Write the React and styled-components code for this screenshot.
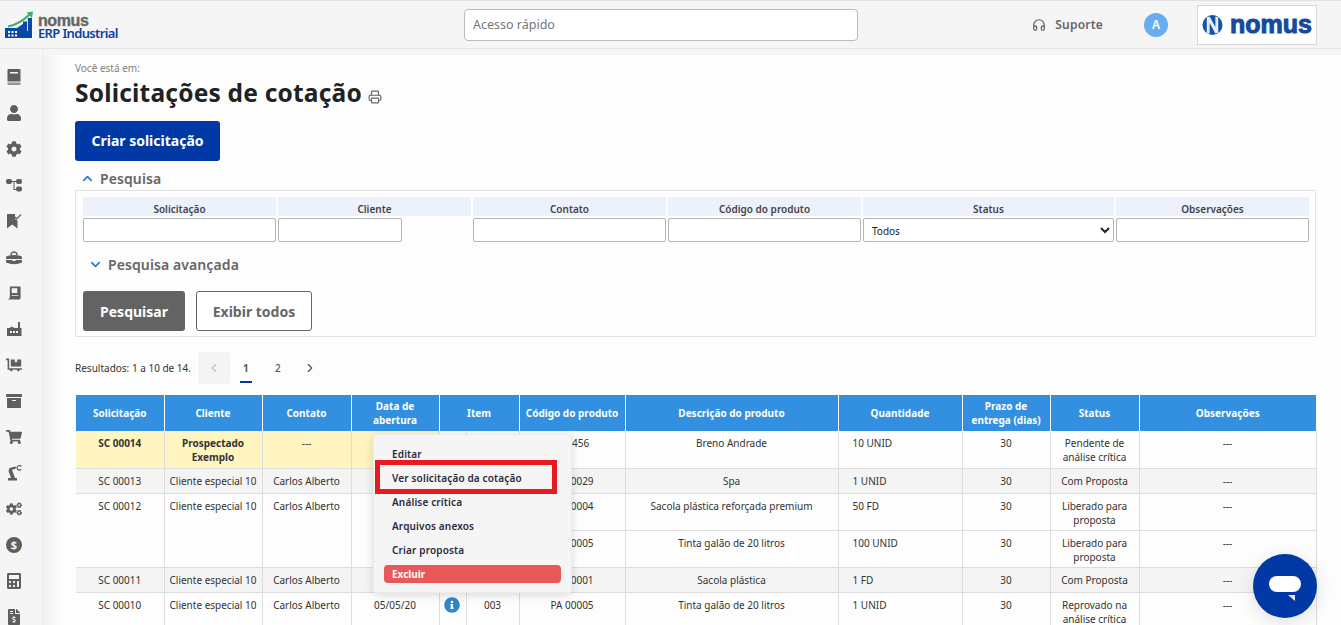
import React from 'react';
import styled, { createGlobalStyle } from 'styled-components';
import { ChevronUp, ChevronDown, ChevronLeft, ChevronRight, Printer, Headphones } from 'lucide-react';
import { FaUser, FaCog, FaDollyFlatbed, FaArchive, FaShoppingCart, FaCogs, FaCalculator, FaFileInvoiceDollar, FaInfoCircle } from 'react-icons/fa';

const Global = createGlobalStyle`
  html, body { margin: 0; padding: 0; height: 625px; overflow: hidden; background: #f5f5f5; }
  body { font-family: "Noto Sans", "Open Sans", sans-serif; color: #222; }
  * { box-sizing: border-box; }
`;

const Page = styled.div`
  width: 1341px; height: 625px; overflow: hidden; position: relative;
  display: flex; flex-direction: column;
`;
const Header = styled.header`
  height: 49px; flex: none; background: #f5f5f5; border-top: 1px solid #e2e2e2; border-bottom: 1px solid #e6e6e6;
  display: grid; grid-template-columns: 464px 394px 245px 94px 120px; align-items: center;
`;
const Brand = styled.div`display: flex; align-items: center; padding-left: 5px; gap: 5px;`;
const BrandText = styled.div`display: flex; flex-direction: column; line-height: 12px; margin-top: 6px;`;
const BrandTop = styled.span`
  font-family: "Liberation Sans", sans-serif; font-size: 16px; font-weight: 700; color: #666; letter-spacing: -.4px; -webkit-text-stroke: .4px #666;
`;
const BrandBottom = styled.span`font-size: 13px; line-height: 13px; font-weight: 600; color: #0b3fa0; letter-spacing: -.65px;`;
const QuickSearch = styled.div`
  width: 394px; height: 32px; background: #fff; border: 1px solid #bbb; border-radius: 4px;
  font-size: 12.5px; color: #777; display: flex; align-items: center; padding-left: 8px;
`;
const Support = styled.div`
  display: flex; align-items: center; gap: 9px; justify-self: end;
  font-size: 12px; font-weight: 600; color: #666; letter-spacing: .2px;
`;
const Avatar = styled.div`
  width: 24px; height: 24px; margin-left: 41px; border-radius: 50%; background: #66aef0; color: #fff; font-size: 12px; font-weight: 600;
  display: flex; align-items: center; justify-content: center;
`;
const CompanyLogo = styled.div`
  width: 120px; height: 40px; background: #fff; border: 1px solid #d6d6d6; display: flex; align-items: center; gap: 7px; padding-left: 4px;
  font-family: "Liberation Sans", sans-serif; font-weight: 700; font-size: 25px; color: #154a9f; -webkit-text-stroke: 1px #154a9f;
  letter-spacing: 0; line-height: 1;
`;
const Body = styled.div`flex: 1; display: flex; min-height: 0;`;
const Sidebar = styled.nav`
  width: 43px; flex: none; background: #f5f5f5; border-right: 1px solid #ededed; display: flex; flex-direction: column; align-items: center;
  padding: 20px 14px 0 0; gap: 20px; color: #5f5f5f; overflow: hidden;
`;
const SideIcon = styled.div`height: 16px; flex: none; display: flex; align-items: center; justify-content: center; font-size: 16px;`;
const Main = styled.main`
  flex: 1; margin-top: 6px; padding: 6px 25px 0 32px; min-width: 0; overflow: hidden;
  background: linear-gradient(90deg, #f1f1f1, #fdfdfd 18px);
`;
const Crumb = styled.div`font-size: 10px; line-height: 14px; color: #808080;`;
const TitleRow = styled.div`display: flex; align-items: flex-end; gap: 6px; height: 32px; margin-top: 2px; color: #666;`;
const Title = styled.h1`margin: 0; font-size: 24.5px; line-height: 32px; font-weight: 700; color: #222; letter-spacing: .2px;`;
const PrintIcon = styled(Printer)`margin-bottom: 5px;`;
const PrimaryButton = styled.button`
  display: block; margin-top: 12px; width: 145px; height: 40px; border: 0; border-radius: 3px; background: #0039a6; color: #fff;
  font: 700 14px "Noto Sans", sans-serif; padding: 0 0 2px;
`;
const SectionToggle = styled.div`
  display: flex; align-items: center; height: 18px; margin-top: 8px; gap: 5px; padding-left: 5px;
  font-size: 14px; font-weight: 600; color: #666; letter-spacing: .1px;
`;
const SearchPanel = styled.section`
  margin-top: 3px; width: 1241px; height: 147px; border: 1px solid #e3e3e3; padding: 6px 7px;
`;
const FieldGrid = styled.div`
  display: grid; grid-template-columns: 193px 193px 193px 193px 251px 193px; column-gap: 2px;
`;
const FieldHead = styled.div`
  height: 19px; background: #ecf1fc; font-size: 10px; font-weight: 600; color: #444; text-align: center; line-height: 25px;
`;
const FieldBox = styled.div`
  margin-top: 2px; height: 24px; width: ${p => p.$w || '100%'}; background: #fff; border: 1px solid #b5b5b5; border-radius: 2px;
`;
const SelectBox = styled.select`
  margin-top: 2px; height: 24px; width: 100%; background: #fff; border: 1px solid #b5b5b5; border-radius: 2px;
  font: 10px "Noto Sans", sans-serif; color: #222; padding: 2px 0 0 4px;
`;
const AdvancedToggle = styled(SectionToggle)`margin-top: 13px;`;
const ButtonRow = styled.div`display: flex; gap: 11px; margin-top: 18px;`;
const DarkButton = styled.button`
  width: 102px; height: 40px; border: 0; border-radius: 3px; background: #636363; color: #fff; font: 700 14px "Noto Sans", sans-serif;
`;
const OutlineButton = styled.button`
  width: 116px; height: 40px; border: 1px solid #666; border-radius: 3px; background: #fff; color: #666; font: 700 14px "Noto Sans", sans-serif;
`;
const ResultsRow = styled.div`display: flex; align-items: center; margin-top: 15px; height: 32px; font-size: 10px; color: #333;`;
const PageBtn = styled.div`
  width: 32px; height: 32px; display: flex; align-items: center; justify-content: center; border-radius: 3px; position: relative;
  background: ${p => p.$muted ? '#f4f4f4' : 'transparent'}; color: ${p => p.$muted ? '#bbb' : '#555'};
  font-weight: ${p => p.$active ? 700 : 500}; font-size: 10px; margin-left: ${p => p.$first ? '7px' : 0};
  ${p => p.$active ? `&:after{content:'';position:absolute;left:10px;right:10px;bottom:1px;height:2px;background:#0039a6;}` : ''}
`;
const TableWrap = styled.div`margin: 11px 0 0 1px; position: relative; width: 1240px;`;
const Table = styled.table`
  border-collapse: collapse; table-layout: fixed; width: 1240px; font-size: 10px; color: #333;
`;
const Col = styled.col`width: ${p => p.$w}px;`;
const Th = styled.th`
  background: #3390e0; color: #fff; font-weight: 700; font-size: 10px; height: 36px; padding: 0 4px; line-height: 14px;
  border-left: 1px solid #fff; &:first-child { border-left: 0; }
`;
const Tr = styled.tr`height: ${p => p.$h}px;`;
const Td = styled.td`
  border: 1px solid #ddd; border-top: 0; vertical-align: top; padding: 5px 4px 3px; line-height: 14px;
  text-align: ${p => p.$left ? 'left' : 'center'}; ${p => p.$left ? 'padding-left: 14px;' : ''}
  background: ${p => p.$bg || 'transparent'}; font-weight: ${p => p.$bold ? 700 : 400};
  &:first-child { border-left: 0; }
`;
const InfoDot = styled.span`color: #2f86c9; font-size: 16px; display: inline-flex; margin: -1px 0 0 -2px;`;
const Menu = styled.div`
  position: absolute; left: 297px; top: 39px; width: 199px; height: 159px; background: #f5f5f5; border-radius: 3px; border: 1px solid #ececec;
  box-shadow: 0 2px 10px rgba(0,0,0,.14); padding-top: 7px; display: flex; flex-direction: column;
`;
const MenuItem = styled.div`
  height: 24px; line-height: 24px; padding-left: 18px; font-size: 10px; font-weight: 600; color: #2a2a3a; letter-spacing: .15px; position: relative;
  ${p => p.$marked ? `&:after{content:'';position:absolute;box-sizing:border-box;left:1px;top:-6px;width:182px;height:34px;border:5px solid #e8191f;}` : ''}
`;
const DangerItem = styled.div`
  height: 18px; line-height: 18px; margin: 3px 10px 0; border-radius: 4px; background: #e85858; color: #fff; font-size: 10px; font-weight: 700; padding-left: 8px;
`;
const ChatBubble = styled.div`
  position: absolute; right: 24px; bottom: 7px; width: 64px; height: 64px; border-radius: 50%; background: #0039a6;
  display: flex; align-items: center; justify-content: center; box-shadow: 0 4px 18px rgba(0,0,0,.12);
`;

const LogoMark = () => (
  <svg width="28" height="28" viewBox="0 0 28 28">
    <path d="M3 15.5 C11 14 19 9 25 3" fill="none" stroke="#3dae6c" strokeWidth="2.2" />
    <path d="M21.5 1.5 L28 0.5 L27 7 Z" fill="#3dae6c" />
    <path d="M0 17 L12 17 L18 13 V10.5 H22 V7 H27 V27 H0 Z" fill="#0a4aa6" />
    <path d="M22.5 7 V20" stroke="#fff" strokeWidth="0.8" />
    <g fill="#fff"><rect x="3" y="20" width="2" height="2"/><rect x="6.5" y="20" width="2" height="2"/><rect x="10" y="20" width="2" height="2"/><rect x="3" y="23.5" width="2" height="2"/><rect x="6.5" y="23.5" width="2" height="2"/><rect x="10" y="23.5" width="2" height="2"/></g>
  </svg>
);
const NomusGlobe = () => (
  <svg width="21" height="24" viewBox="0 0 22 24">
    <circle cx="11" cy="12" r="10.5" fill="#1253a8" />
    <path d="M5 21 V4 L8 3 L14 14 V3 L17 4 V20 L14 21 L8 10 V21 Z" fill="#e5ecf5" />
  </svg>
);
const BookIcon = () => (
  <svg width="14" height="16" viewBox="0 0 14 16" fill="currentColor"><path d="M1.5 0 H12.5 Q13.5 0 13.5 1 V12.5 H0.5 V1 Q0.5 0 1.5 0 Z M3 3 V4.6 H11 V3 Z" fillRule="evenodd"/><path d="M0.5 13.5 H13.5 V16 H2 Q0.5 16 0.5 14.5 Z" opacity=".65"/></svg>
);
const DiagramIcon = () => (
  <svg width="16" height="14" viewBox="0 0 16 14" fill="currentColor"><rect x="0" y="1" width="6" height="5" rx="2"/><rect x="10" y="1" width="6" height="5" rx="2"/><rect x="10" y="8.5" width="6" height="5" rx="2"/><path d="M5 3 H11 V4 H8.5 V11 H11 V12 H7.5 V4 H5 Z"/></svg>
);
const BookmarkCheck = () => (
  <svg width="16" height="16" viewBox="0 0 16 16" fill="currentColor"><path d="M1 1 H9 V6 L11.5 7.5 V15.5 L6.2 11.5 L1 15.5 Z"/><path d="M9 4 L10.8 5.8 L15 1.5" fill="none" stroke="currentColor" strokeWidth="1.2"/></svg>
);
const Kit = () => (
  <svg width="16" height="15" viewBox="0 0 16 15" fill="currentColor"><path d="M1 6 Q8 4 15 6 Q16 6.5 16 8 V9 H0 V8 Q0 6.5 1 6 Z"/><path d="M0 10 H6.5 V11 H9.5 V10 H16 V12.5 Q8 16 0 12.5 Z"/><path d="M4.5 5 V3 Q8 -0.5 11.5 3 V5 H10 V3.6 Q8 2 6 3.6 V5 Z"/></svg>
);
const Ledger = () => (
  <svg width="15" height="16" viewBox="0 0 16 16" fill="currentColor"><path d="M3 1 H14.5 V13 Q14.5 15 12.5 15 H1 Q3 14 3 12 Z M5 3 V8 H11 V3 Z M5 10 V11 H12 V10 Z" fillRule="evenodd"/></svg>
);
const Factory = () => (
  <svg width="16" height="16" viewBox="0 0 16 16" fill="currentColor"><path d="M1 7 H4 L5 5.5 L9 7 H12 V1 H14 V7 H15.5 V15 H1 Z M4 10 V12 H6 V10 Z M7 10 V12 H9 V10 Z M10 10 V12 H12 V10 Z" fillRule="evenodd"/></svg>
);
const Robot = () => (
  <svg width="16" height="16" viewBox="0 0 16 16" fill="currentColor"><path d="M2 15.5 V13 L5 13 L2.5 6 L3.5 3 L9.5 1.5 L10.2 3.2 L6 5 L9 13 H11 V15.5 Z"/><path d="M15.5 1.2 Q11.5 -0.5 11 2.8 Q11.5 6 15.5 4.5" fill="none" stroke="currentColor" strokeWidth="1.3"/></svg>
);
const DollarRound = () => (
  <svg width="16" height="16" viewBox="0 0 16 16"><circle cx="8" cy="8" r="8" fill="currentColor"/><text x="8" y="12" textAnchor="middle" fontSize="11" fontWeight="700" fill="#f5f5f5" fontFamily="Noto Sans">$</text></svg>
);

const headers = [
  ['Solicitação', 1], ['Cliente', 1], ['Contato', 1], ['Data de abertura', 1], ['Item', 2],
  ['Código do produto', 1], ['Descrição do produto', 1], ['Quantidade', 1], ['Prazo de entrega (dias)', 1], ['Status', 1], ['Observações', 1],
];
const widths = [88, 98, 89, 88, 27, 53, 106, 213, 124, 88, 89, 177];

const rows = [
  { y: true, s: 'SC 00014', c: 'Prospectado Exemplo', ct: '---', code: '123456', d: 'Breno Andrade', q: '10 UNID', st: 'Pendente de análise crítica', h: 37, dt: '' },
  { g: true, s: 'SC 00013', c: 'Cliente especial 10', ct: 'Carlos Alberto', code: 'PA 00029', d: 'Spa', q: '1 UNID', st: 'Com Proposta', h: 25 },
  { s: 'SC 00012', c: 'Cliente especial 10', ct: 'Carlos Alberto', code: 'PA 00004', d: 'Sacola plástica reforçada premium', q: '50 FD', st: 'Liberado para proposta', h: 37, span: 2 },
  { cont: true, code: 'PA 00005', d: 'Tinta galão de 20 litros', q: '100 UNID', st: 'Liberado para proposta', h: 37 },
  { g: true, s: 'SC 00011', c: 'Cliente especial 10', ct: 'Carlos Alberto', code: 'PA 00001', d: 'Sacola plástica', q: '1 FD', st: 'Com Proposta', h: 25 },
  { s: 'SC 00010', c: 'Cliente especial 10', ct: 'Carlos Alberto', dt: '05/05/20', info: true, item: '003', code: 'PA 00005', d: 'Tinta galão de 20 litros', q: '1 UNID', st: 'Reprovado na análise crítica', h: 37 },
];

export default function App() {
  const sideIcons = [<BookIcon />, <FaUser />, <FaCog />, <DiagramIcon />, <BookmarkCheck />, <Kit />, <Ledger />, <Factory />, <FaDollyFlatbed />, <FaArchive />, <FaShoppingCart />, <Robot />, <FaCogs />, <DollarRound />, <FaCalculator />, <FaFileInvoiceDollar />];
  return (
    <Page>
      <Global />
      <Header>
        <Brand>
          <LogoMark />
          <BrandText><BrandTop>nomus</BrandTop><BrandBottom>ERP Industrial</BrandBottom></BrandText>
        </Brand>
        <QuickSearch>Acesso rápido</QuickSearch>
        <Support><Headphones size={14} color="#555" />Suporte</Support>
        <Avatar>A</Avatar>
        <CompanyLogo><NomusGlobe />nomus</CompanyLogo>
      </Header>
      <Body>
        <Sidebar>{sideIcons.map((ic, i) => <SideIcon key={i}>{ic}</SideIcon>)}</Sidebar>
        <Main>
          <Crumb>Você está em:</Crumb>
          <TitleRow><Title>Solicitações de cotação</Title><PrintIcon size={14} /></TitleRow>
          <PrimaryButton>Criar solicitação</PrimaryButton>
          <SectionToggle><ChevronUp size={15} color="#1f78d1" strokeWidth={2.5} />Pesquisa</SectionToggle>
          <SearchPanel>
            <FieldGrid>
              <div><FieldHead>Solicitação</FieldHead><FieldBox /></div>
              <div><FieldHead>Cliente</FieldHead><FieldBox $w="124px" /></div>
              <div><FieldHead>Contato</FieldHead><FieldBox /></div>
              <div><FieldHead>Código do produto</FieldHead><FieldBox /></div>
              <div><FieldHead>Status</FieldHead><SelectBox defaultValue="Todos"><option>Todos</option></SelectBox></div>
              <div><FieldHead>Observações</FieldHead><FieldBox /></div>
            </FieldGrid>
            <AdvancedToggle><ChevronDown size={15} color="#1f78d1" strokeWidth={2.5} />Pesquisa avançada</AdvancedToggle>
            <ButtonRow><DarkButton>Pesquisar</DarkButton><OutlineButton>Exibir todos</OutlineButton></ButtonRow>
          </SearchPanel>
          <ResultsRow>
            Resultados: 1 a 10 de 14.
            <PageBtn $muted $first><ChevronLeft size={14} /></PageBtn>
            <PageBtn $active>1</PageBtn>
            <PageBtn>2</PageBtn>
            <PageBtn><ChevronRight size={14} /></PageBtn>
          </ResultsRow>
          <TableWrap>
            <Table>
              <colgroup>{widths.map((w, i) => <Col key={i} $w={w} />)}</colgroup>
              <thead>
                <tr>{headers.map(([t, span]) => <Th key={t} colSpan={span}>{t}</Th>)}</tr>
              </thead>
              <tbody>
                {rows.map((r, i) => {
                  const bg = r.y ? '#fef5c0' : r.g ? '#f4f4f4' : undefined;
                  const rest = r.y ? undefined : bg;
                  return (
                    <Tr key={i} $h={r.h}>
                      {!r.cont && <Td $bg={bg} $bold={r.y} rowSpan={r.span || 1}>{r.s}</Td>}
                      {!r.cont && <Td $bg={bg} $bold={r.y} rowSpan={r.span || 1}>{r.c}</Td>}
                      {!r.cont && <Td $bg={bg} rowSpan={r.span || 1}>{r.ct}</Td>}
                      {!r.cont && <Td $bg={bg} rowSpan={r.span || 1}>{r.dt}</Td>}
                      <Td $bg={rest}>{r.info && <InfoDot><FaInfoCircle /></InfoDot>}</Td>
                      <Td $bg={rest}>{r.item}</Td>
                      <Td $bg={rest}>{r.code}</Td>
                      <Td $bg={rest}>{r.d}</Td>
                      <Td $bg={rest} $left>{r.q}</Td>
                      <Td $bg={rest}>30</Td>
                      <Td $bg={rest}>{r.st}</Td>
                      <Td $bg={rest}>---</Td>
                    </Tr>
                  );
                })}
              </tbody>
            </Table>
            <Menu>
              <MenuItem>Editar</MenuItem>
              <MenuItem $marked>Ver solicitação da cotação</MenuItem>
              <MenuItem>Análise crítica</MenuItem>
              <MenuItem>Arquivos anexos</MenuItem>
              <MenuItem>Criar proposta</MenuItem>
              <DangerItem>Excluir</DangerItem>
            </Menu>
          </TableWrap>
        </Main>
      </Body>
      <ChatBubble>
        <svg width="32" height="30" viewBox="0 0 32 30"><rect x="0" y="5" width="32" height="16" rx="8" fill="#fff"/><path d="M19 24 L26 24 L26 30 Z" fill="#dfe6f5"/></svg>
      </ChatBubble>
    </Page>
  );
}
